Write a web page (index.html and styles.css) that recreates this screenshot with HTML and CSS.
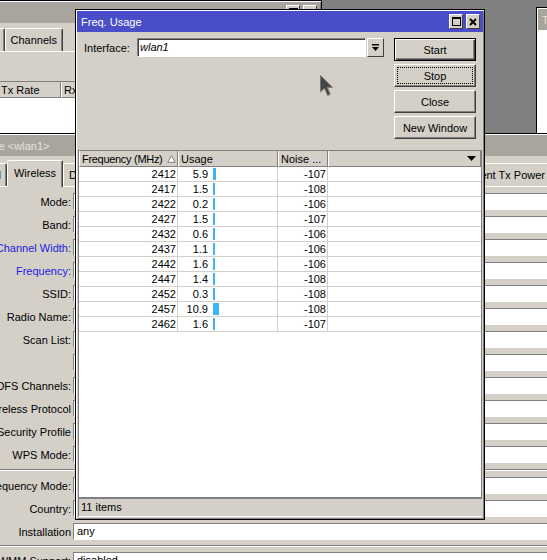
FILE: index.html
```html
<!DOCTYPE html>
<html lang="en">
<head>
    <meta charset="UTF-8">
    <title>Freq. Usage</title>
    <link rel="stylesheet" href="styles.css">
</head>
<body>
<div class="desktop">

    <!-- Wireless Tables (behind, title is off screen) -->
    <div class="window win-tables">
        <div class="titlebar inactive">
            <span class="title"></span>
            <span class="title-buttons">
                <span class="tbtn"><svg width="9" height="9" viewBox="0 0 9 9"><rect x="0.5" y="0.5" width="8" height="8" fill="none" stroke="#000"/><rect width="9" height="2" fill="#000"/></svg></span>
                <span class="tbtn"><svg width="8" height="8" viewBox="0 0 8 8"><path d="M1 1 7 7M7 1 1 7" stroke="#000" stroke-width="2"/></svg></span>
            </span>
        </div>
        <div class="tabstrip">
            <div class="tab-lead tables-lead">
                <span class="tab">Security Profiles</span>
                <span class="tab">Channels</span>
            </div>
        </div>
        <div class="toolbar"></div>
        <div class="list">
            <div class="list-head">
                <span class="hcell col-if"></span>
                <span class="hcell col-tx">Tx Rate</span>
                <span class="hcell col-rx">Rx Rate</span>
                <span class="hcell fill"></span>
            </div>
        </div>
    </div>

    <!-- Terminal (behind, right) -->
    <div class="window win-terminal">
        <div class="titlebar inactive">
            <span class="title">Terminal</span>
        </div>
        <div class="term-body"></div>
    </div>

    <!-- Interface <wlan1> -->
    <div class="window win-iface">
        <div class="titlebar inactive">
            <span class="title">Interface &lt;wlan1&gt;</span>
        </div>
        <div class="tabstrip">
            <div class="tab-lead iface-lead">
                <span class="tab">General</span>
            </div>
            <span class="tab selected">Wireless</span>
            <!-- the rest of these tabs sit under the Freq. Usage window -->
            <div class="tab-hidden">
                <span class="tab">Data Rates</span>
            </div>
            <span class="tab">Current Tx Power</span>
            <span class="tab">Status</span>
        </div>
        <div class="panel">
            <div class="frow"><span class="flabel">Mode:</span><div class="field"></div></div>
            <div class="frow"><span class="flabel">Band:</span><div class="field"></div></div>
            <div class="frow"><span class="flabel blue">Channel Width:</span><div class="field"></div></div>
            <div class="frow"><span class="flabel blue">Frequency:</span><div class="field"></div></div>
            <div class="frow"><span class="flabel">SSID:</span><div class="field"></div></div>
            <div class="frow"><span class="flabel">Radio Name:</span><div class="field"></div></div>
            <div class="frow"><span class="flabel">Scan List:</span><div class="field"></div></div>
            <div class="frow"><span class="flabel"></span><div class="field"></div></div>
            <div class="frow"><span class="flabel">Skip DFS Channels:</span><div class="field"></div></div>
            <div class="frow"><span class="flabel">Wireless Protocol</span><div class="field"></div></div>
            <div class="frow"><span class="flabel">Security Profile</span><div class="field"></div></div>
            <div class="frow"><span class="flabel">WPS Mode:</span><div class="field"></div></div>
            <div class="sep"></div>
            <div class="frow"><span class="flabel">Frequency Mode:</span><div class="field"></div></div>
            <div class="frow"><span class="flabel">Country:</span><div class="field"></div></div>
            <div class="frow"><span class="flabel">Installation</span><div class="field">any</div></div>
            <div class="sep tight"></div>
            <div class="frow"><span class="flabel">WMM Support:</span><div class="field">disabled</div></div>
        </div>
    </div>

    <!-- Freq. Usage (active) -->
    <div class="window win-freq">
        <div class="titlebar">
            <span class="title">Freq. Usage</span>
            <span class="title-buttons">
                <span class="tbtn"><svg width="9" height="9" viewBox="0 0 9 9"><rect x="0.5" y="0.5" width="8" height="8" fill="none" stroke="#000"/><rect width="9" height="2" fill="#000"/></svg></span>
                <span class="tbtn"><svg width="8" height="8" viewBox="0 0 8 8"><path d="M1 1 7 7M7 1 1 7" stroke="#000" stroke-width="2"/></svg></span>
            </span>
        </div>

        <div class="freq-top">
            <div class="iface-row">
                <span class="iface-label">Interface:</span>
                <div class="combo">wlan1</div>
                <span class="combo-btn"><svg width="7" height="8" viewBox="0 0 7 8"><rect width="7" height="1.5" fill="#000"/><path d="M0 3h7L3.5 7z" fill="#000"/></svg></span>
            </div>
            <div class="btn-col">
                <button class="btn default">Start</button>
                <button class="btn focused">Stop</button>
                <button class="btn">Close</button>
                <button class="btn">New Window</button>
            </div>
        </div>

        <div class="list">
            <div class="list-head">
                <span class="hcell col-freq sorted"><span class="htext">Frequency (MHz)</span>
                    <svg width="9" height="8" viewBox="0 0 9 8"><path d="M4.5 0.8 8.3 7.3H0.7Z" fill="#fff" stroke="#808080"/></svg>
                </span>
                <span class="hcell col-usage">Usage</span>
                <span class="hcell col-noise">Noise ...</span>
                <span class="hcell fill">
                    <svg width="9" height="5" viewBox="0 0 9 5"><path d="M0 0h9L4.5 5z" fill="#000"/></svg>
                </span>
            </div>
            <div class="list-body">
                <div class="row"><span class="cell num col-freq">2412</span><span class="cell usage col-usage"><span class="usage-val">5.9</span><span class="usage-bar" style="width: 3px"></span></span><span class="cell num col-noise">-107</span><span class="cell fill"></span></div>
                <div class="row"><span class="cell num col-freq">2417</span><span class="cell usage col-usage"><span class="usage-val">1.5</span><span class="usage-bar" style="width: 2px"></span></span><span class="cell num col-noise">-108</span><span class="cell fill"></span></div>
                <div class="row"><span class="cell num col-freq">2422</span><span class="cell usage col-usage"><span class="usage-val">0.2</span><span class="usage-bar" style="width: 2px"></span></span><span class="cell num col-noise">-106</span><span class="cell fill"></span></div>
                <div class="row"><span class="cell num col-freq">2427</span><span class="cell usage col-usage"><span class="usage-val">1.5</span><span class="usage-bar" style="width: 2px"></span></span><span class="cell num col-noise">-107</span><span class="cell fill"></span></div>
                <div class="row"><span class="cell num col-freq">2432</span><span class="cell usage col-usage"><span class="usage-val">0.6</span><span class="usage-bar" style="width: 2px"></span></span><span class="cell num col-noise">-106</span><span class="cell fill"></span></div>
                <div class="row"><span class="cell num col-freq">2437</span><span class="cell usage col-usage"><span class="usage-val">1.1</span><span class="usage-bar" style="width: 2px"></span></span><span class="cell num col-noise">-106</span><span class="cell fill"></span></div>
                <div class="row"><span class="cell num col-freq">2442</span><span class="cell usage col-usage"><span class="usage-val">1.6</span><span class="usage-bar" style="width: 2px"></span></span><span class="cell num col-noise">-106</span><span class="cell fill"></span></div>
                <div class="row"><span class="cell num col-freq">2447</span><span class="cell usage col-usage"><span class="usage-val">1.4</span><span class="usage-bar" style="width: 2px"></span></span><span class="cell num col-noise">-108</span><span class="cell fill"></span></div>
                <div class="row"><span class="cell num col-freq">2452</span><span class="cell usage col-usage"><span class="usage-val">0.3</span><span class="usage-bar" style="width: 2px"></span></span><span class="cell num col-noise">-108</span><span class="cell fill"></span></div>
                <div class="row"><span class="cell num col-freq">2457</span><span class="cell usage col-usage"><span class="usage-val">10.9</span><span class="usage-bar" style="width: 6px"></span></span><span class="cell num col-noise">-108</span><span class="cell fill"></span></div>
                <div class="row"><span class="cell num col-freq">2462</span><span class="cell usage col-usage"><span class="usage-val">1.6</span><span class="usage-bar" style="width: 2px"></span></span><span class="cell num col-noise">-107</span><span class="cell fill"></span></div>
            </div>
        </div>

        <div class="statusbar">
            <span class="status-panel">11 items</span>
        </div>
    </div>

    <!-- mouse pointer -->
    <svg class="cursor" width="14" height="22" viewBox="0 0 14 22"><path d="M0.5 0.5V17L4.5 13.2 7.6 20.4 10.2 19.3 7.2 12.3H12.5Z" fill="#454545" stroke="#777" stroke-width="1"/></svg>
</div>
</body>
</html>
```

FILE: styles.css
```css
* {
    box-sizing: border-box;
}

body {
    margin: 0;
    background-color: #808080;
    font-family: "Liberation Sans", Arial, sans-serif;
    font-size: 11px;
    color: #000;
}

.desktop {
    position: relative;
    width: 547px;
    height: 560px;
    overflow: hidden;
    background-color: #808080;
}

/* Windows */
.window {
    position: absolute;
    display: flex;
    flex-direction: column;
    padding: 1px;
    background-color: #d4d0c8;
    border: 1px solid #000;
    box-shadow: inset 1px 1px #fff, inset -1px -1px #808080;
}

.win-tables {
    left: -100px;
    top: 0;
    width: 422px;
    height: 140px;
}

.win-terminal {
    left: 536px;
    top: 7px;
    width: 120px;
    height: 130px;
}

.win-iface {
    left: -44px;
    top: 133px;
    width: 640px;
    height: 460px;
}

.win-freq {
    left: 75px;
    top: 9px;
    width: 410px;
    height: 511px;
}

.titlebar {
    display: flex;
    flex-shrink: 0;
    align-items: center;
    justify-content: space-between;
    height: 21px;
    padding: 0 3px 0 4px;
    background-color: #4a4dc8;
    color: #fff;
    white-space: nowrap;
}

.titlebar.inactive {
    background-color: #a9a59e;
    color: #e4e1db;
}

.title-buttons {
    display: flex;
    gap: 3px;
}

.tbtn {
    display: flex;
    align-items: center;
    justify-content: center;
    width: 14px;
    height: 15px;
    background-color: #d4d0c8;
    border: 1px solid;
    border-color: #fff #404040 #404040 #fff;
}

/* Tabs */
.tabstrip {
    display: flex;
    flex-shrink: 0;
    align-items: flex-end;
    border-bottom: 1px solid #fff;
}

.win-tables .tabstrip {
    padding-top: 5px;
}

.win-iface .tabstrip {
    padding-top: 4px;
}

.tab-lead {
    display: flex;
    flex-shrink: 0;
    justify-content: flex-end;
    overflow: hidden;
}

.tables-lead {
    width: 161px;
}

.iface-lead {
    width: 49px;
}

.tab-hidden {
    display: flex;
    flex-shrink: 0;
    width: 390px;
    overflow: hidden;
}

.tab {
    display: flex;
    flex-shrink: 0;
    align-items: center;
    height: 23px;
    padding: 0 5px;
    border: 1px solid;
    border-bottom: 0;
    border-color: #fff #404040 transparent #fff;
    border-radius: 2px 2px 0 0;
    box-shadow: inset -1px 0 #808080;
    white-space: nowrap;
}

.tab.selected {
    position: relative;
    justify-content: center;
    width: 56px;
    height: 27px;
    margin-bottom: -1px;
    padding-bottom: 2px;
    background-color: #d4d0c8;
}

.toolbar {
    flex-shrink: 0;
    height: 29px;
}

.term-body {
    flex: 1;
    background-color: #fff;
}

/* Interface form */
.panel {
    padding-top: 6px;
}

.frow {
    display: flex;
    align-items: center;
    height: 17px;
    margin-bottom: 6px;
}

.flabel {
    flex-shrink: 0;
    width: 113px;
    text-align: right;
    white-space: nowrap;
}

.flabel.blue {
    color: #2020e0;
}

.field {
    flex: 1;
    height: 17px;
    margin-left: 2px;
    padding-left: 3px;
    line-height: 15px;
    background-color: #fff;
    border: 1px solid;
    border-color: #808080 #fff #fff #808080;
}

.sep {
    height: 2px;
    margin-bottom: 6px;
    border-top: 1px solid #808080;
    border-bottom: 1px solid #fff;
}

.sep.tight {
    margin-top: -1px;
    margin-bottom: 5px;
}

/* Freq. Usage */
.freq-top {
    display: flex;
    flex-shrink: 0;
    padding: 6px 7px 11px;
}

.iface-row {
    display: flex;
    align-items: center;
    height: 19px;
}

.iface-label {
    width: 53px;
}

.combo {
    width: 229px;
    height: 19px;
    padding-left: 2px;
    line-height: 17px;
    font-style: italic;
    background-color: #fff;
    border: 1px solid;
    border-color: #808080 #fff #fff #808080;
    box-shadow: inset 1px 1px #404040;
}

.combo-btn {
    display: flex;
    align-items: center;
    justify-content: center;
    width: 17px;
    height: 19px;
    margin-left: 1px;
    background-color: #d4d0c8;
    border: 1px solid;
    border-color: #fff #404040 #404040 #fff;
}

.btn-col {
    display: flex;
    flex-direction: column;
    gap: 3px;
    margin-left: auto;
}

.btn {
    width: 82px;
    height: 23px;
    padding: 0;
    font: inherit;
    color: #000;
    background-color: #d4d0c8;
    border: 1px solid;
    border-color: #fff #404040 #404040 #fff;
    box-shadow: inset -1px -1px #808080;
}

.btn.default {
    border-color: #000;
    box-shadow: inset 1px 1px #fff, inset -1px -1px #404040, inset -2px -2px #808080;
}

.btn.focused {
    outline: 1px dotted #000;
    outline-offset: -4px;
}

/* Lists */
.list {
    display: flex;
    flex: 1;
    flex-direction: column;
    min-height: 0;
    background-color: #fff;
    border: 1px solid #808080;
}

.win-freq .list {
    margin: 0 1px;
    border-bottom-width: 2px;
}

.list-head {
    display: flex;
    flex-shrink: 0;
    height: 16px;
    background-color: #d4d0c8;
}

.hcell {
    display: flex;
    flex-shrink: 0;
    align-items: center;
    padding: 0 2px;
    border-left: 1px solid #fff;
    border-right: 1px solid #808080;
    border-bottom: 1px solid #808080;
    white-space: nowrap;
    overflow: hidden;
}

.hcell.sorted {
    justify-content: space-between;
    padding-right: 1px;
}

.htext {
    letter-spacing: -0.3px;
}

.hcell.fill {
    flex: 1;
    justify-content: flex-end;
    padding-right: 4px;
}

.col-if { width: 95px; }
.col-tx { width: 63px; }
.col-rx { width: 70px; }

.col-freq { width: 99px; }
.col-usage { width: 100px; }
.col-noise { width: 50px; }

.row {
    display: flex;
    height: 15px;
    line-height: 14px;
    border-bottom: 1px solid #d4d0c8;
}

.cell {
    flex-shrink: 0;
    border-right: 1px solid #d4d0c8;
    white-space: nowrap;
}

.cell.num {
    text-align: right;
    padding-right: 1px;
}

.cell.usage {
    display: flex;
    align-items: center;
}

.cell.fill {
    flex: 1;
    border-right: 0;
}

.usage-val {
    width: 30px;
    text-align: right;
}

.usage-bar {
    height: 12px;
    margin-left: 5px;
    background-color: #3cb6f0;
}

.statusbar {
    display: flex;
    flex-shrink: 0;
    height: 19px;
    padding: 0 1px 1px;
}

.status-panel {
    flex: 1;
    padding-left: 2px;
    line-height: 17px;
    border-left: 1px solid #808080;
    border-bottom: 1px solid #fff;
}

.cursor {
    position: absolute;
    left: 320px;
    top: 75px;
}
```
